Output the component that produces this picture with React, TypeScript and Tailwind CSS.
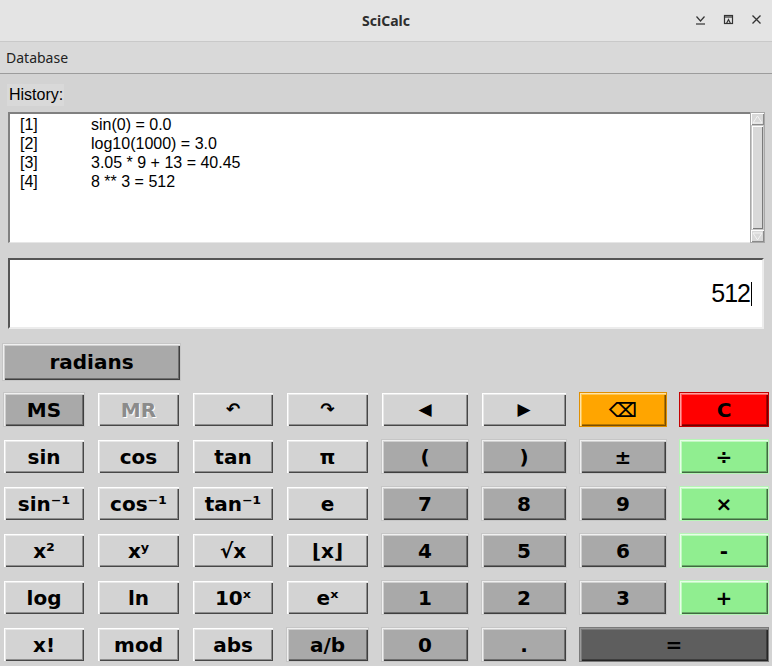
import React from 'react';

type Kind = 'light' | 'dark' | 'orange' | 'red' | 'green' | 'eq';

const kindCls: Record<Kind, string> = {
  light:
    'bg-[#d3d3d3] border-[#d3d3d3] shadow-[inset_1px_1px_0_#ffffff,inset_2px_2px_0_#e8e8e8,inset_-1px_-1px_0_#474747,inset_-2px_-2px_0_#8e8e8e]',
  dark:
    'bg-[#a9a9a9] border-[#c6c6c6] shadow-[inset_1px_1px_0_#f0f0f0,inset_2px_2px_0_#cfcfcf,inset_-1px_-1px_0_#3f3f3f,inset_-2px_-2px_0_#6e6e6e]',
  orange:
    'bg-[#ffa500] border-[#e08f00] shadow-[inset_1px_1px_0_#ffe3a8,inset_2px_2px_0_#ffc64d,inset_-1px_-1px_0_#7a4d00,inset_-2px_-2px_0_#b57700]',
  red:
    'bg-[#ff0000] border-[#c40000] shadow-[inset_1px_1px_0_#ff9e9e,inset_2px_2px_0_#ff5a5a,inset_-1px_-1px_0_#700000,inset_-2px_-2px_0_#a80000]',
  green:
    'bg-[#90ee90] border-[#b6f5b6] shadow-[inset_1px_1px_0_#e6ffe6,inset_2px_2px_0_#c2f7c2,inset_-1px_-1px_0_#3f6b3f,inset_-2px_-2px_0_#68a868]',
  eq:
    'bg-[#5e5e5e] border-[#7a7a7a] shadow-[inset_1px_1px_0_#9a9a9a,inset_2px_2px_0_#7a7a7a,inset_-1px_-1px_0_#262626,inset_-2px_-2px_0_#3e3e3e]',
};

type B = { label: string; kind: Kind; small?: boolean; disabled?: boolean; span?: boolean };

const rows: B[][] = [
  [
    { label: 'MS', kind: 'dark' },
    { label: 'MR', kind: 'light', disabled: true },
    { label: '↶', kind: 'light', small: true },
    { label: '↷', kind: 'light', small: true },
    { label: '◀', kind: 'light', small: true },
    { label: '▶', kind: 'light', small: true },
    { label: '⌫', kind: 'orange' },
    { label: 'C', kind: 'red' },
  ],
  [
    { label: 'sin', kind: 'light' },
    { label: 'cos', kind: 'light' },
    { label: 'tan', kind: 'light' },
    { label: 'π', kind: 'light' },
    { label: '(', kind: 'dark' },
    { label: ')', kind: 'dark' },
    { label: '±', kind: 'dark' },
    { label: '÷', kind: 'green' },
  ],
  [
    { label: 'sin⁻¹', kind: 'light' },
    { label: 'cos⁻¹', kind: 'light' },
    { label: 'tan⁻¹', kind: 'light' },
    { label: 'e', kind: 'light' },
    { label: '7', kind: 'dark' },
    { label: '8', kind: 'dark' },
    { label: '9', kind: 'dark' },
    { label: '×', kind: 'green' },
  ],
  [
    { label: 'x²', kind: 'light' },
    { label: 'xʸ', kind: 'light' },
    { label: '√x', kind: 'light' },
    { label: '⌊x⌋', kind: 'light' },
    { label: '4', kind: 'dark' },
    { label: '5', kind: 'dark' },
    { label: '6', kind: 'dark' },
    { label: '-', kind: 'green' },
  ],
  [
    { label: 'log', kind: 'light' },
    { label: 'ln', kind: 'light' },
    { label: '10ˣ', kind: 'light' },
    { label: 'eˣ', kind: 'light' },
    { label: '1', kind: 'dark' },
    { label: '2', kind: 'dark' },
    { label: '3', kind: 'dark' },
    { label: '+', kind: 'green' },
  ],
  [
    { label: 'x!', kind: 'light' },
    { label: 'mod', kind: 'light' },
    { label: 'abs', kind: 'light' },
    { label: 'a/b', kind: 'dark' },
    { label: '0', kind: 'dark' },
    { label: '.', kind: 'dark' },
    { label: '=', kind: 'eq', span: true },
  ],
];

const history = [
  ['[1]', 'sin(0) = 0.0'],
  ['[2]', 'log10(1000) = 3.0'],
  ['[3]', '3.05 * 9 + 13 = 40.45'],
  ['[4]', '8 ** 3 = 512'],
];

function CalcButton({ b }: { b: B }) {
  return (
    <button
      className={`flex items-center justify-center border font-bold ${kindCls[b.kind]} ${
        b.span ? 'col-span-2' : ''
      } ${b.small ? 'text-[17px]' : 'text-[20px]'} ${
        b.disabled ? 'text-[#8b8b8b] [text-shadow:1px_1px_0_#ffffff]' : 'text-black'
      }`}
    >
      {b.label}
    </button>
  );
}

export default function App() {
  return (
    <div className="w-[772px] h-[666px] overflow-hidden bg-[#d3d3d3] font-['DejaVu_Sans',sans-serif]">
      {/* title bar */}
      <div className="h-[42px] bg-[#e4e4e4] border-b border-[#c9c9c9] flex items-center relative">
        <div className="flex-1 text-center font-['Noto_Sans',sans-serif] font-bold text-[14px] text-[#2e2e2e]">
          SciCalc
        </div>
        <div className="absolute right-[10px] top-[14px] flex items-center gap-[17px] text-[#333]">
          <svg width="11" height="11" viewBox="0 0 11 11" fill="none" stroke="#333" strokeWidth="1.2">
            <path d="M1.5 2.5 L5.5 7 L9.5 2.5" />
            <path d="M1 10 H10" />
          </svg>
          <svg width="11" height="11" viewBox="0 0 11 11" fill="none" stroke="#333" strokeWidth="1.2">
            <rect x="1.5" y="1.5" width="8" height="8" />
            <path d="M1.5 3 H9.5" />
            <path d="M3.5 9.5 L5.5 5.5 L7.5 9.5" />
          </svg>
          <svg width="11" height="11" viewBox="0 0 11 11" fill="none" stroke="#333" strokeWidth="1.3">
            <path d="M1.5 1.5 L9.5 9.5 M9.5 1.5 L1.5 9.5" />
          </svg>
        </div>
      </div>

      {/* menu bar */}
      <div className="h-[32px] bg-[#d9d9d9] border-b border-[#9c9c9c] flex items-center pl-[6px] font-['Noto_Sans',sans-serif] text-[14px] text-[#222]">
        Database
      </div>

      <div className="pt-[10px] font-['Liberation_Sans',sans-serif]">
        <div className="ml-[7px] w-[57px] h-[22px] bg-[#d9d9d9] flex items-center pl-[2px] text-[16px] text-black">
          History:
        </div>

        {/* history list */}
        <div className="mt-[6px] ml-[8px] w-[757px] h-[131px] flex">
          <div className="flex-1 bg-white border-t-2 border-l-2 border-t-[#808080] border-l-[#808080] border-b border-b-[#e6e6e6] pt-[1px] text-[16px] leading-[19px] text-black">
            {history.map(([n, e]) => (
              <div key={n} className="flex">
                <span className="w-[81px] pl-[10px]">{n}</span>
                <span>{e}</span>
              </div>
            ))}
          </div>
          <div className="w-[15px] bg-[#c8c8c8] border border-[#a8a8a8] flex flex-col">
            <div className="h-[12px] flex items-center justify-center bg-[#d9d9d9] shadow-[inset_1px_1px_0_#ffffff,inset_-1px_-1px_0_#8a8a8a]">
              <svg width="11" height="9" viewBox="0 0 11 9" fill="none" stroke="#f4f4f4" strokeWidth="1">
                <path d="M1 8 L5.5 1 L10 8 Z" />
              </svg>
            </div>
            <div className="flex-1 m-[1px] bg-[#d9d9d9] shadow-[inset_1px_1px_0_#ffffff,inset_-1px_-1px_0_#7a7a7a]" />
            <div className="h-[12px] flex items-center justify-center bg-[#d9d9d9] shadow-[inset_1px_1px_0_#ffffff,inset_-1px_-1px_0_#8a8a8a]">
              <svg width="11" height="9" viewBox="0 0 11 9" fill="none" stroke="#f4f4f4" strokeWidth="1">
                <path d="M1 1 L5.5 8 L10 1 Z" />
              </svg>
            </div>
          </div>
        </div>

        {/* display */}
        <div className="mt-[15px] ml-[8px] w-[756px] h-[71px] bg-white border-2 border-t-[#555555] border-l-[#555555] border-b-[#ececec] border-r-[#ececec] flex items-center justify-end pr-[10px] text-[25px] text-black">
          <span className="tracking-[-1px]">512</span>
          <span className="w-[1px] h-[24px] bg-black ml-[1px]" />
        </div>
      </div>

      {/* radians */}
      <div className="mt-[14px] ml-[2px]">
        <button className={`w-[179px] h-[38px] flex items-center justify-center border font-bold text-[20px] text-black ${kindCls.dark}`}>
          radians
        </button>
      </div>

      {/* keypad */}
      <div className="mt-[11px] ml-[3px] grid grid-cols-[82px_83px_82px_83px_88px_86px_88px_90px] auto-rows-[35px] gap-x-[12px] gap-y-[12px]">
        {rows.flat().map((b, i) => (
          <CalcButton key={i} b={b} />
        ))}
      </div>
    </div>
  );
}
